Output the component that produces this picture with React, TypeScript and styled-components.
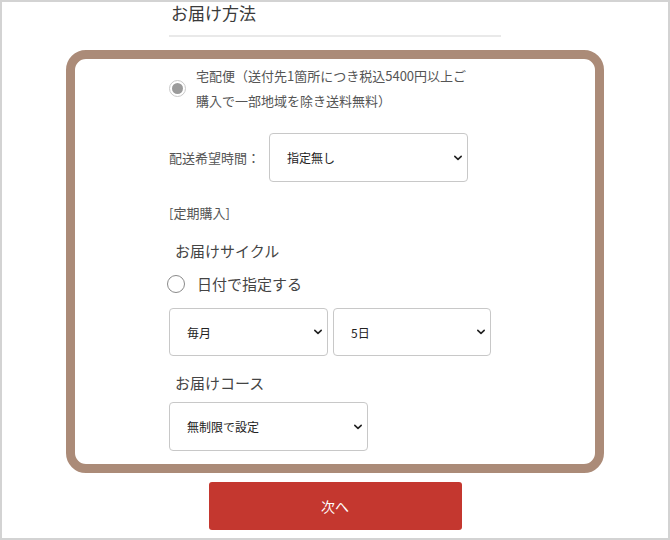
import React from "react";
import styled, { createGlobalStyle } from "styled-components";

const GlobalStyle = createGlobalStyle`
    html, body {
        margin: 0;
        padding: 0;
        background: #fff;
    }
    body {
        font-family: "Noto Sans CJK JP", "Noto Sans", sans-serif;
    }
`;

const Chevron = () => (
    <svg width="10" height="7" viewBox="0 0 10 7">
        <path d="M1.8 1.8 L5 4.8 L8.2 1.8" fill="none" stroke="#222" strokeWidth="1.6" strokeLinecap="round" strokeLinejoin="round" />
    </svg>
);

type SelectProps = { width: number; value: string };

const SelectBox = ({ width, value }: SelectProps) => (
    <SelectWrap $width={width}>
        <Select defaultValue={value}>
            <option>{value}</option>
        </Select>
        <ChevronHolder><Chevron /></ChevronHolder>
    </SelectWrap>
);

/**
 * お届け方法
 */
const App = () => {
    return (
        <Page>
            <GlobalStyle />
            <Header>
                <h3 className="title">お届け方法</h3>
            </Header>
            <Card>
                <Column>
                    <RadioRow>
                        <Radio $checked />
                        <p className="label">
                            宅配便（送付先1箇所につき税込5400円以上ご<br />購入で一部地域を除き送料無料）
                        </p>
                    </RadioRow>
                    <TimeRow>
                        <span className="label">配送希望時間：</span>
                        <SelectBox width={199} value="指定無し" />
                    </TimeRow>
                    <Note>[定期購入]</Note>
                    <SubTitle>お届けサイクル</SubTitle>
                    <DateRow>
                        <Radio />
                        <span className="label">日付で指定する</span>
                    </DateRow>
                    <SelectPair>
                        <SelectBox width={159} value="毎月" />
                        <SelectBox width={158} value="5日" />
                    </SelectPair>
                    <SubTitle className="course">お届けコース</SubTitle>
                    <SelectBox width={199} value="無制限で設定" />
                </Column>
            </Card>
            <NextButton type="button">次へ</NextButton>
        </Page>
    );
};

const Page = styled.div`
    box-sizing: border-box;
    width: 670px;
    height: 540px;
    border: 2px solid #d3d3d3;
    display: flex;
    flex-direction: column;
    align-items: center;
    overflow: hidden;
`;

const Header = styled.div`
    width: 332px;
    padding-bottom: 9px;
    border-bottom: 2px solid #e9e9e9;
    .title {
        margin: -2px 0 0 2px;
        font-size: 17px;
        font-weight: 400;
        line-height: 26px;
        color: #3a3a3a;
    }
`;

const Card = styled.div`
    box-sizing: border-box;
    margin-top: 13px;
    width: 538px;
    height: 423px;
    border: 9px solid #ab8b78;
    border-radius: 20px;
    padding: 4px 0 0;
`;

const Column = styled.div`
    width: 332px;
    margin: 0 auto;
    display: flex;
    flex-direction: column;
    align-items: flex-start;
`;

const Radio = styled.span<{ $checked?: boolean }>`
    box-sizing: border-box;
    flex: none;
    width: ${p => (p.$checked ? 17 : 18)}px;
    height: ${p => (p.$checked ? 17 : 18)}px;
    border-radius: 50%;
    border: 1px solid ${p => (p.$checked ? "#c9c9c9" : "#8a8a8a")};
    background: #fff;
    display: flex;
    align-items: center;
    justify-content: center;
    &:after {
        content: "";
        display: ${p => (p.$checked ? "block" : "none")};
        width: 11px;
        height: 11px;
        border-radius: 50%;
        background: #9b9b9b;
    }
`;

const RadioRow = styled.div`
    display: flex;
    align-items: center;
    gap: 10px;
    .label {
        margin: 0;
        font-size: 13px;
        line-height: 25px;
        color: #555;
    }
`;

const TimeRow = styled.div`
    margin-top: 20px;
    display: flex;
    align-items: center;
    gap: 9px;
    .label {
        font-size: 13px;
        color: #555;
    }
`;

const SelectWrap = styled.div<{ $width: number }>`
    position: relative;
    width: ${p => p.$width}px;
    height: 49px;
`;

const Select = styled.select`
    box-sizing: border-box;
    appearance: none;
    width: 100%;
    height: 100%;
    border: 1px solid #c8c8c8;
    border-radius: 4px;
    background: #fff;
    padding: 0 24px 0 17px;
    font-family: "Noto Sans CJK JP", "Noto Sans", sans-serif;
    font-size: 12px;
    color: #222;
    outline: none;
`;

const ChevronHolder = styled.span`
    position: absolute;
    right: 5px;
    top: 50%;
    transform: translateY(-50%);
    display: flex;
    pointer-events: none;
`;

const Note = styled.div`
    margin-top: 21px;
    font-size: 13px;
    line-height: 20px;
    color: #555;
`;

const SubTitle = styled.div`
    margin: 17px 0 0 6px;
    font-size: 15px;
    line-height: 22px;
    color: #444;
    &.course {
        margin-top: 16px;
        margin-bottom: 8px;
    }
`;

const DateRow = styled.div`
    margin: 11px 0 0 -2px;
    display: flex;
    align-items: center;
    gap: 12px;
    .label {
        font-size: 15px;
        line-height: 22px;
        color: #444;
    }
`;

const SelectPair = styled.div`
    margin: 13px 0 0;
    display: flex;
    gap: 5px;
    & > div {
        height: 48px;
    }
`;

const NextButton = styled.button`
    margin-top: 9px;
    width: 253px;
    height: 48px;
    border: none;
    border-radius: 3px;
    background: #c4372f;
    color: #fff;
    font-family: "Noto Sans CJK JP", "Noto Sans", sans-serif;
    font-size: 14px;
    cursor: pointer;
`;

export default App;
